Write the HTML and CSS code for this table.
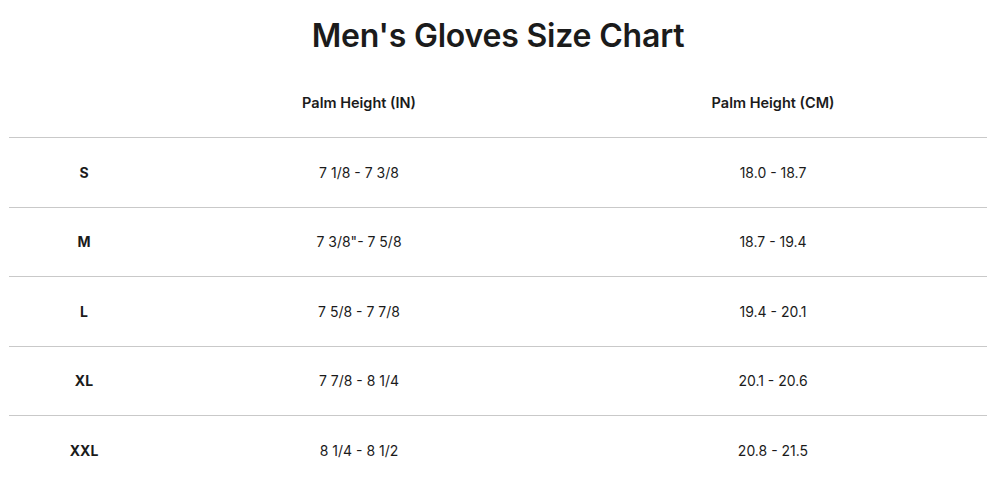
FILE: index.html
```html
<!DOCTYPE html>
<html lang="en">
<head>
<meta charset="utf-8">
<title>Men's Gloves Size Chart</title>
<link rel="stylesheet" href="styles.css">
</head>
<body>
<main class="chart">
  <h1 class="chart-title">Men's Gloves Size Chart</h1>
  <table class="size-table">
    <colgroup>
      <col class="col-size">
      <col class="col-in">
      <col class="col-cm">
    </colgroup>
    <thead>
      <tr>
        <th></th>
        <th>Palm Height (IN)</th>
        <th>Palm Height (CM)</th>
      </tr>
    </thead>
    <tbody>
      <tr><th>S</th><td>7 1/8 - 7 3/8</td><td>18.0 - 18.7</td></tr>
      <tr><th>M</th><td>7 3/8"- 7 5/8</td><td>18.7 - 19.4</td></tr>
      <tr><th>L</th><td>7 5/8 - 7 7/8</td><td>19.4 - 20.1</td></tr>
      <tr><th>XL</th><td>7 7/8 - 8 1/4</td><td>20.1 - 20.6</td></tr>
      <tr><th>XXL</th><td>8 1/4 - 8 1/2</td><td>20.8 - 21.5</td></tr>
    </tbody>
  </table>
</main>
</body>
</html>
```
FILE: styles.css
```css
html, body {
  margin: 0;
  padding: 0;
  background: #ffffff;
}

body {
  font-family: Inter, "Liberation Sans", Arial, sans-serif;
  color: #1b1b1b;
}

.chart {
  padding: 0 13px 0 9px;
}

.chart-title {
  margin: 0;
  height: 68px;
  padding-top: 3px;
  display: flex;
  align-items: center;
  justify-content: center;
  font-size: 32px;
  font-weight: 600;
  letter-spacing: -0.2px;
  box-sizing: border-box;
}

.size-table {
  width: 978px;
  border-collapse: collapse;
  table-layout: fixed;
}

.col-size { width: 150px; }
.col-in { width: 400px; }
.col-cm { width: 428px; }

.size-table th,
.size-table td {
  height: 69.5px;
  padding: 0;
  text-align: center;
  vertical-align: middle;
  box-sizing: border-box;
}

.size-table thead th {
  font-size: 14.5px;
  font-weight: 600;
  border-bottom: 1px solid #c9c9c9;
}

.size-table tbody th {
  font-size: 14px;
  font-weight: 700;
}

.size-table tbody td {
  font-size: 14px;
  font-weight: 400;
}

.size-table tbody tr + tr th,
.size-table tbody tr + tr td {
  border-top: 1px solid #c9c9c9;
}
```
